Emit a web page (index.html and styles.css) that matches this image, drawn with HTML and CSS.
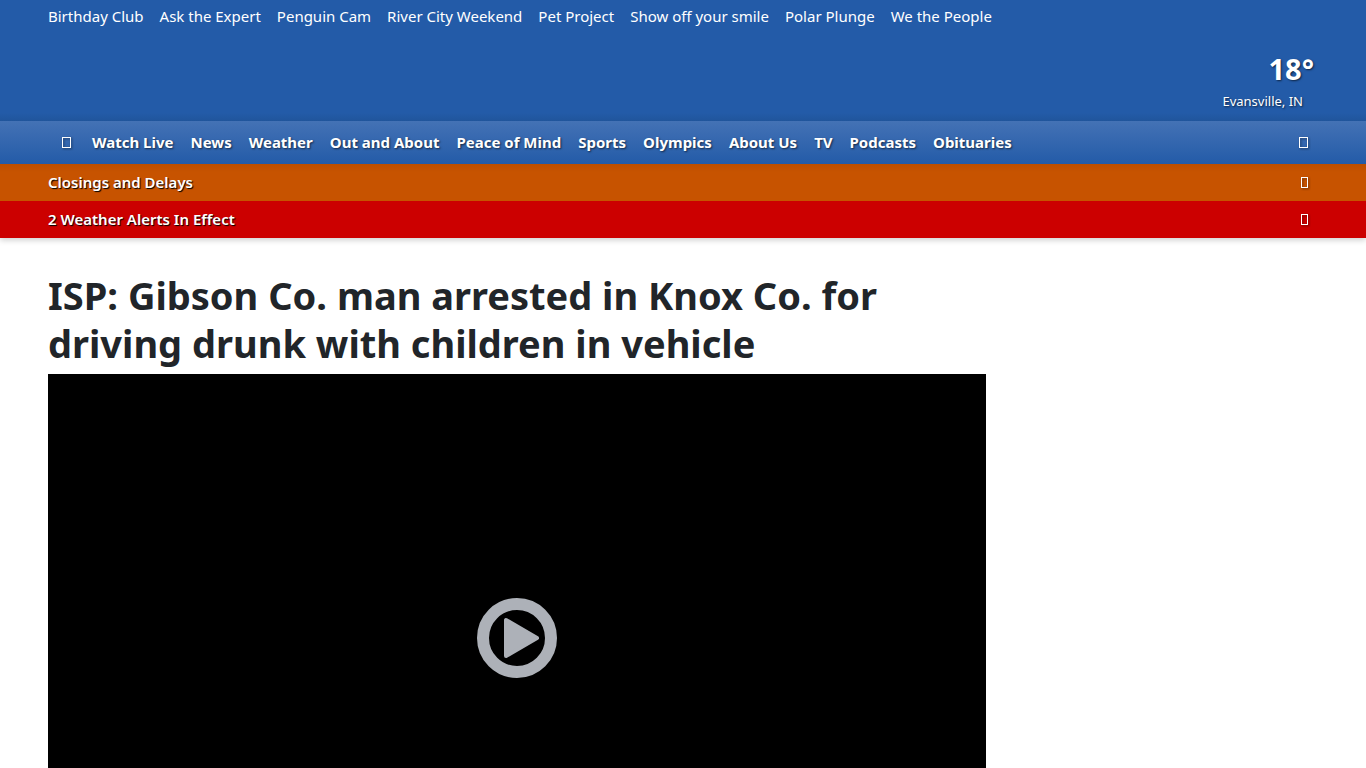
FILE: index.html
```
<!DOCTYPE html>
<html lang="en">
<head>
    <meta charset="UTF-8">
    <meta name="viewport" content="width=device-width, initial-scale=1.0">
    <title>ISP: Gibson Co. man arrested in Knox Co. for driving drunk with children in vehicle</title>
    <link rel="stylesheet" href="styles.css">
</head>
<body>
    <header class="site-header">
        <div class="masthead">
            <nav class="top-links" aria-label="Features">
                <a href="#">Birthday Club</a>
                <a href="#">Ask the Expert</a>
                <a href="#">Penguin Cam</a>
                <a href="#">River City Weekend</a>
                <a href="#">Pet Project</a>
                <a href="#">Show off your smile</a>
                <a href="#">Polar Plunge</a>
                <a href="#">We the People</a>
            </nav>
            <a class="current-weather" href="#">
                <span class="temp">18°</span>
                <span class="city">Evansville, IN</span>
            </a>
        </div>

        <nav class="main-nav" aria-label="Main">
            <a class="home" href="#" aria-label="Home">
                <svg class="icon" viewBox="0 0 9 11"><rect x="0.5" y="0.5" width="8" height="10"/></svg>
            </a>
            <a href="#">Watch Live</a>
            <a href="#">News</a>
            <a href="#">Weather</a>
            <a href="#">Out and About</a>
            <a href="#">Peace of Mind</a>
            <a href="#">Sports</a>
            <a href="#">Olympics</a>
            <a href="#">About Us</a>
            <a href="#">TV</a>
            <a href="#">Podcasts</a>
            <a href="#">Obituaries</a>
            <button class="search" type="button" aria-label="Search">
                <svg class="icon" viewBox="0 0 9 11"><rect x="0.5" y="0.5" width="8" height="10"/></svg>
            </button>
        </nav>

        <a class="alert closings" href="#">
            <span>Closings and Delays</span>
            <svg class="icon-small" viewBox="0 0 7 11"><rect x="0.5" y="0.5" width="6" height="10"/></svg>
        </a>
        <a class="alert weather-alerts" href="#">
            <span>2 Weather Alerts In Effect</span>
            <svg class="icon-small" viewBox="0 0 7 11"><rect x="0.5" y="0.5" width="6" height="10"/></svg>
        </a>
    </header>

    <main class="content">
        <article class="story">
            <h1>ISP: Gibson Co. man arrested in Knox Co. for driving drunk with children in vehicle</h1>
            <div class="video">
                <button class="play" type="button" aria-label="Play video">
                    <svg viewBox="0 0 80 80">
                        <circle cx="40" cy="40" r="34" fill="none" stroke="#adb1b8" stroke-width="12"/>
                        <path d="M29 22v36l31-18z" fill="#adb1b8" stroke="#adb1b8" stroke-width="4" stroke-linejoin="round"/>
                    </svg>
                </button>
            </div>
        </article>
        <aside class="sidebar"></aside>
    </main>
</body>
</html>
```
FILE: styles.css
```
* {
    box-sizing: border-box;
}
body {
    font-family: "Segoe UI", "Noto Sans", "Open Sans", sans-serif;
    margin: 0;
    background-color: #fff;
    color: #212529;
}
a {
    color: #fff;
    text-decoration: none;
}
button {
    background: none;
    border: none;
    padding: 0;
    cursor: pointer;
}
.site-header {
    box-shadow: 0 2px 6px rgba(0, 0, 0, 0.2);
}
.masthead {
    padding: 4px 48px 8px;
    background: linear-gradient(to top, #20559c, #235ba8 8px);
}
.top-links {
    display: flex;
    flex-wrap: wrap;
    gap: 0 16px;
    font-size: 15px;
    line-height: 24px;
}
.current-weather {
    display: flex;
    flex-direction: column;
    align-items: flex-end;
    padding-top: 20px;
    text-shadow: 1px 1px 2px rgba(0, 0, 0, 0.6);
}
.temp {
    padding-right: 4px;
    font-size: 29px;
    font-weight: bold;
    line-height: 42px;
}
.city {
    padding-right: 15px;
    font-size: 13px;
    line-height: 23px;
}
.main-nav {
    display: flex;
    align-items: center;
    gap: 17px;
    padding: 8px 58px 8px 48px;
    background: linear-gradient(#4472b5, #235ba8);
    font-size: 15px;
    font-weight: bold;
    line-height: 27px;
    white-space: nowrap;
    text-shadow: 1px 1px 2px rgba(0, 0, 0, 0.6);
}
.home {
    display: flex;
    padding: 0 4px 0 14px;
}
.search {
    display: flex;
    margin-left: auto;
}
.icon,
.icon-small {
    fill: none;
    stroke: #fff;
    filter: drop-shadow(1px 1px 1px rgba(0, 0, 0, 0.5));
}
.icon {
    width: 9px;
    height: 11px;
}
.icon-small {
    width: 7px;
    height: 11px;
}
.alert {
    display: flex;
    align-items: center;
    justify-content: space-between;
    padding: 6px 58px 7px 48px;
    font-size: 15px;
    font-weight: 600;
    line-height: 24px;
    text-shadow: 1px 1px 1px #000;
}
.closings {
    background: linear-gradient(#bc4e00, #c75300 8px);
}
.weather-alerts {
    background-color: #c00;
}
.content {
    display: grid;
    grid-template-columns: minmax(0, 1fr) 300px;
    gap: 32px;
    padding: 33px 48px 0;
}
h1 {
    margin: 0 0 7px;
    font-size: 38px;
    font-weight: bold;
    line-height: 48px;
}
.video {
    display: flex;
    align-items: center;
    justify-content: center;
    aspect-ratio: 16 / 9;
    background-color: #000;
}
.play {
    width: 80px;
    height: 80px;
}
.play svg {
    display: block;
}
```
